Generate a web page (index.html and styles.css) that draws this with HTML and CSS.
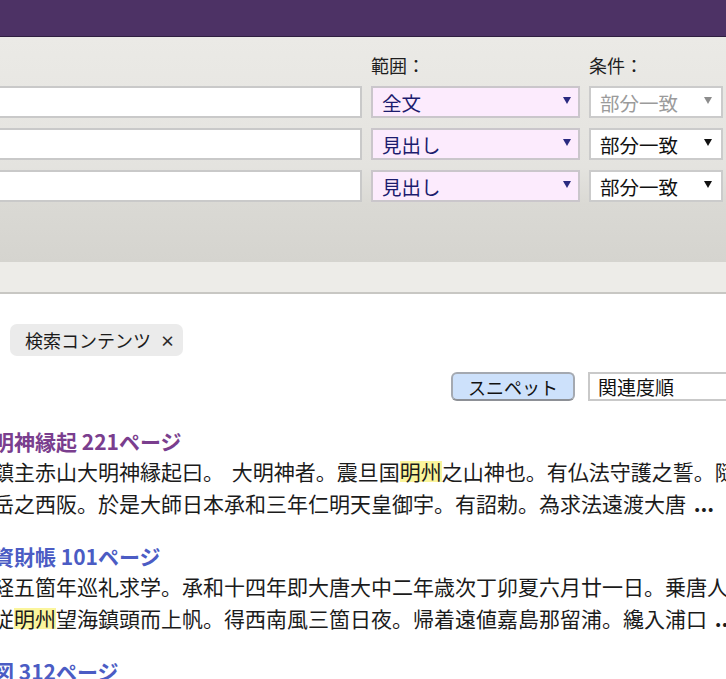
FILE: index.html
```html
<!DOCTYPE html>
<html lang="ja">
<head>
<meta charset="utf-8">
<title>検索</title>
<link rel="stylesheet" href="styles.css">
</head>
<body>
<header class="topbar"></header>

<section class="search-panel">
  <div class="search-grid">
    <span class="field-label"></span>
    <span class="field-label">範囲：</span>
    <span class="field-label">条件：</span>

    <input class="text-input" type="text">
    <div class="select select-range"><span>全文</span><i class="caret"></i></div>
    <div class="select select-cond is-disabled"><span>部分一致</span><i class="caret"></i></div>

    <input class="text-input" type="text">
    <div class="select select-range"><span>見出し</span><i class="caret"></i></div>
    <div class="select select-cond"><span>部分一致</span><i class="caret"></i></div>

    <input class="text-input" type="text">
    <div class="select select-range"><span>見出し</span><i class="caret"></i></div>
    <div class="select select-cond"><span>部分一致</span><i class="caret"></i></div>
  </div>
</section>
<div class="filter-strip"></div>

<main class="results-area">
  <div class="chips">
    <span class="chip">検索コンテンツ<span class="chip-x">×</span></span>
  </div>

  <div class="toolbar">
    <button class="btn-snippet" type="button">スニペット</button>
    <div class="sort-select">関連度順</div>
  </div>

  <ol class="results">
    <li class="result">
      <a class="result-title is-visited">明神縁起 221ページ</a>
      <p class="snippet">
        <span class="line">鎮主赤山大明神縁起曰。 大明神者。震旦国<mark class="hl">明州</mark>之山神也。有仏法守護之誓。隨</span>
        <span class="line">岳之西阪。於是大師日本承和三年仁明天皇御宇。有詔勅。為求法遠渡大唐 <b>...</b></span>
      </p>
    </li>
    <li class="result">
      <a class="result-title">資財帳 101ページ</a>
      <p class="snippet">
        <span class="line">経五箇年巡礼求学。承和十四年即大唐大中二年歳次丁卯夏六月廿一日。乗唐人</span>
        <span class="line">従<mark class="hl">明州</mark>望海鎮頭而上帆。得西南風三箇日夜。帰着遠値嘉島那留浦。纔入浦口 <b>...</b></span>
      </p>
    </li>
    <li class="result">
      <a class="result-title">図 312ページ</a>
    </li>
  </ol>
</main>
</body>
</html>
```

FILE: styles.css
```css
html, body {
  margin: 0;
  padding: 0;
  overflow: hidden;
  background: #ffffff;
}

body {
  width: 726px;
  font-family: "Noto Sans CJK JP", "Noto Sans", sans-serif;
  color: #1b1b1b;
}

.topbar {
  height: 36px;
  background: #4d3265;
  border-bottom: 1px solid #2f1f40;
}

.search-panel {
  padding: 17px 3px 60px 0;
  background: linear-gradient(to bottom, #ebeae6 0%, #e4e3df 58%, #dad9d4 74%, #d5d4cf 100%);
}

.search-grid {
  margin-left: -40px;
  display: grid;
  grid-template-columns: 1fr 209px 134px;
  grid-auto-rows: 32px;
  grid-template-rows: 22px;
  column-gap: 9px;
  row-gap: 10px;
}

.field-label {
  font-size: 18px;
  line-height: 22px;
  color: #1e1e1e;
}

.text-input {
  box-sizing: border-box;
  width: 100%;
  height: 32px;
  margin: 0;
  padding: 0 8px;
  border: 2px solid #c9c9c9;
  background: #ffffff;
  font: inherit;
  outline: none;
}

.select {
  box-sizing: border-box;
  height: 32px;
  display: flex;
  align-items: center;
  justify-content: space-between;
  border: 2px solid #cbcbcb;
  font-size: 19.5px;
  line-height: 28px;
  padding: 2px 7px 0 9px;
}

.select-range {
  background: #fcebfd;
  border-color: #cac6cb;
  color: #1c1c6e;
}

.select-cond {
  background: #ffffff;
  color: #111111;
  padding-right: 9px;
}

.select-cond.is-disabled {
  color: #9b9b9b;
}

.caret {
  width: 0;
  height: 0;
  border-left: 4px solid transparent;
  border-right: 4px solid transparent;
  border-top: 7px solid #2a2a80;
  margin-bottom: 5px;
}

.select-cond .caret {
  border-top-color: #111111;
}

.select-cond.is-disabled .caret {
  border-top-color: #8c8c8c;
}

.filter-strip {
  height: 30px;
  background: #edece8;
  border-bottom: 2px solid #c8c7c3;
}

.results-area {
  padding-top: 30px;
}

.chips {
  display: flex;
  padding-left: 10px;
}

.chip {
  display: inline-flex;
  align-items: center;
  height: 32px;
  padding: 0 8px 0 15px;
  border-radius: 7px;
  background: #ebebeb;
  font-size: 18px;
  color: #1b1b1b;
}

.chip-x {
  margin-left: 9px;
  font-size: 15px;
  font-weight: bold;
  color: #2a2a2a;
}

.toolbar {
  display: flex;
  justify-content: flex-end;
  align-items: center;
  gap: 13px;
  margin-top: 16px;
  margin-right: -40px;
}

.btn-snippet {
  box-sizing: border-box;
  width: 124px;
  height: 29px;
  padding: 0;
  border: 2px solid #a4a9b1;
  border-bottom-color: #8d9096;
  border-radius: 6px;
  background: #cde1fb;
  font-family: inherit;
  font-size: 18px;
  line-height: 24px;
  color: #111111;
}

.sort-select {
  box-sizing: border-box;
  width: 178px;
  height: 29px;
  padding: 0 8px;
  border: 2px solid #c9c9c9;
  background: #ffffff;
  font-size: 19px;
  line-height: 25px;
  color: #111111;
}

.results {
  list-style: none;
  margin: 26px 0 0 -7px;
  padding: 0;
}

.result + .result {
  margin-top: 23px;
}

.result-title {
  display: block;
  font-size: 21px;
  font-weight: bold;
  line-height: 28px;
  color: #4b5cc4;
  white-space: nowrap;
}

.result-title.is-visited {
  color: #7a3e8e;
}

.snippet {
  margin: 0;
  font-size: 21px;
  line-height: 32px;
  word-spacing: 3px;
}

.line {
  display: block;
  white-space: nowrap;
}

.line b {
  font-weight: bold;
}

.hl {
  display: inline-block;
  line-height: 21px;
  background: #fbf59c;
  color: inherit;
  word-spacing: 0;
}
```
